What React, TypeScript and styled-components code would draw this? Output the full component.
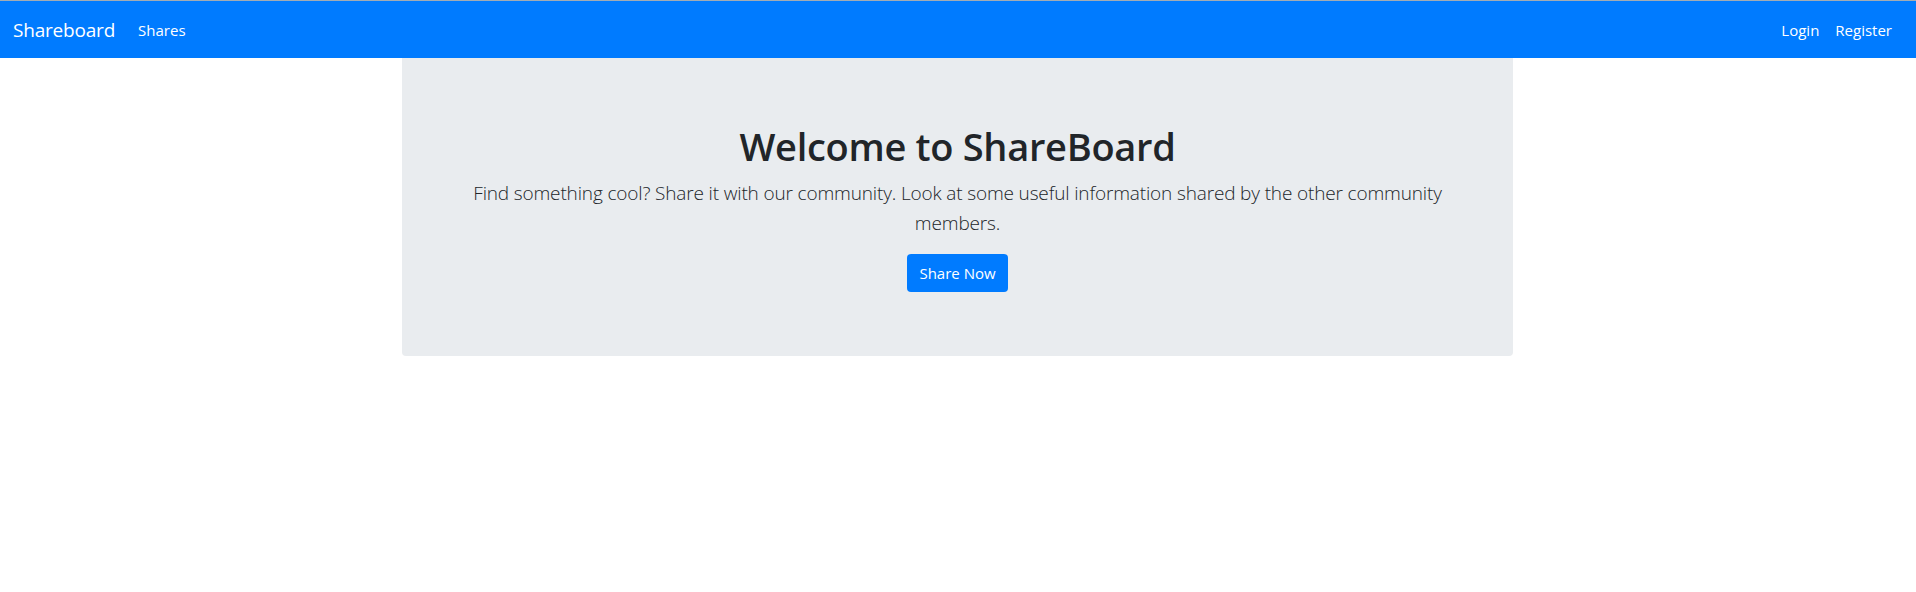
import React from "react";
import styled, { createGlobalStyle } from "styled-components";

const GlobalStyle = createGlobalStyle`
  html, body { margin: 0; padding: 0; background: #fff; }
  body {
    font-family: "Open Sans", "Noto Sans", sans-serif;
    color: #212529;
    font-size: 16px;
    line-height: 1.5;
  }
  * { box-sizing: border-box; }
`;

const Page = styled.div`
  border-top: 1px solid #a3acb4;
`;

const Navbar = styled.nav`
  height: 57px;
  background: #007bff;
  display: flex;
  align-items: center;
  justify-content: space-between;
  padding: 0 16px 0 13px;
`;

const NavGroup = styled.div`
  display: flex;
  align-items: center;
`;

const Brand = styled.a`
  color: #fff;
  font-size: 19px;
  line-height: 30px;
  margin-right: 15px;
  letter-spacing: -0.2px;
  text-decoration: none;
`;

const NavLink = styled.a`
  color: #fff;
  font-size: 15px;
  line-height: 24px;
  padding: 8px 8px;
  text-decoration: none;
`;

const Container = styled.main`
  width: 1142px;
  margin: 0 auto;
  padding: 0 16px 0 15px;
`;

const Jumbotron = styled.section`
  background: #e9ecef;
  border-radius: 0 0 4px 4px;
  padding: 64px 32px;
  text-align: center;
`;

const Title = styled.h1`
  margin: 0 0 8px;
  font-size: 38px;
  font-weight: 600;
  line-height: 48px;
  letter-spacing: -0.3px;
`;

const Lead = styled.p`
  margin: 0 0 16px;
  font-size: 19px;
  font-weight: 300;
  line-height: 30px;
  color: #212529;
  letter-spacing: -0.15px;
  padding: 0 20px;
`;

const Button = styled.a`
  display: inline-block;
  height: 38px;
  padding: 0 12px;
  background: #007bff;
  color: #fff;
  border-radius: 4px;
  font-size: 15px;
  line-height: 38px;
  text-decoration: none;
`;

export default function App() {
  return (
    <Page>
      <GlobalStyle />
      <Navbar>
        <NavGroup>
          <Brand href="#">Shareboard</Brand>
          <NavLink href="#">Shares</NavLink>
        </NavGroup>
        <NavGroup>
          <NavLink href="#">Login</NavLink>
          <NavLink href="#">Register</NavLink>
        </NavGroup>
      </Navbar>
      <Container>
        <Jumbotron>
          <Title>Welcome to ShareBoard</Title>
          <Lead>
            Find something cool? Share it with our community. Look at some useful information shared by the other community members.
          </Lead>
          <Button href="#">Share Now</Button>
        </Jumbotron>
      </Container>
    </Page>
  );
}
